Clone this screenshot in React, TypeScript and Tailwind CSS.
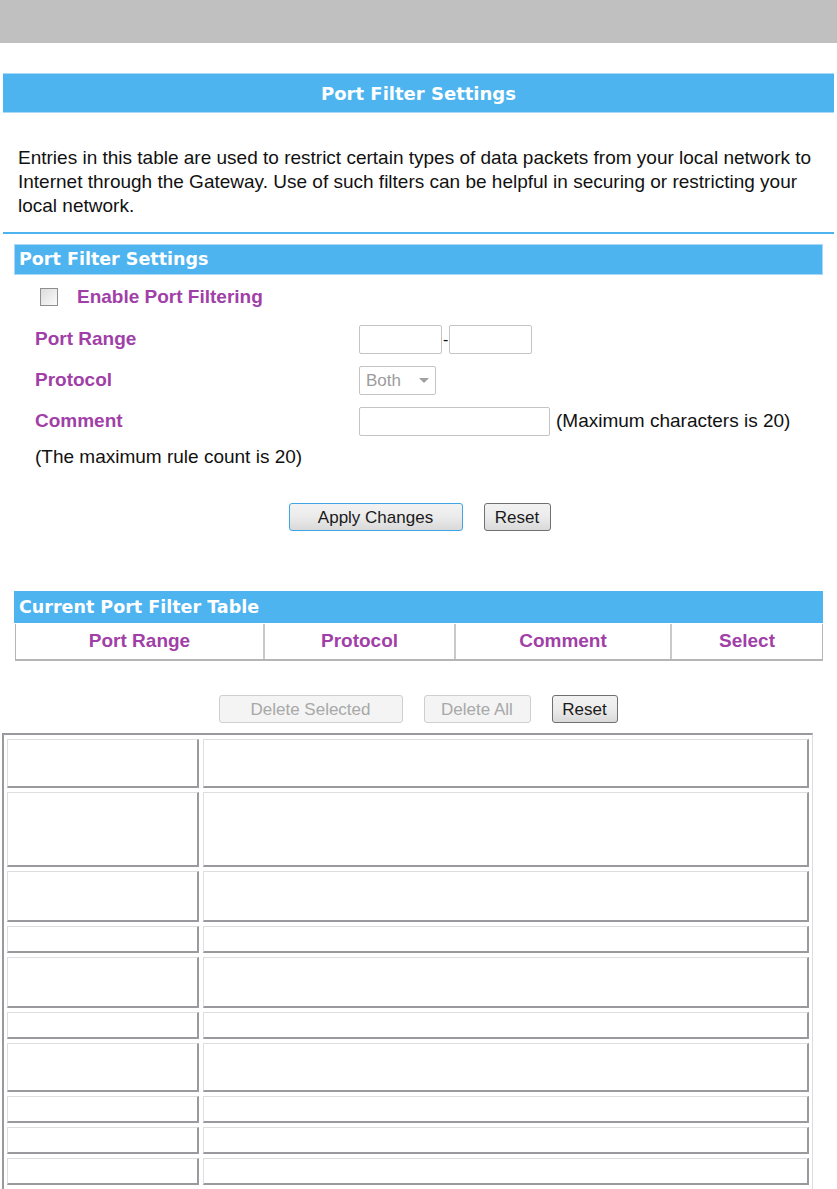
const PURPLE = "text-[#a13fa8]";

function FormRow({ label, children }: { label: string; children: React.ReactNode }) {
  return (
    <div className="flex h-[41px] items-center">
      <div className={`w-[359px] pl-[35px] text-[19px] font-bold ${PURPLE}`}>{label}</div>
      <div className="flex items-center">{children}</div>
    </div>
  );
}

function Btn({ children, w, variant = "normal" }: { children: React.ReactNode; w: string; variant?: "normal" | "focus" | "disabled" }) {
  const border =
    variant === "focus"
      ? "border-[#3fa6e6]"
      : variant === "disabled"
      ? "border-[#cfcfcf]"
      : "border-[#707070]";
  const text = variant === "disabled" ? "text-[#a8a8a8]" : "text-[#1a1a1a]";
  const bg =
    variant === "disabled"
      ? "bg-[#f4f4f4]"
      : "bg-gradient-to-b from-[#f2f2f2] via-[#ebebeb] to-[#d9d9d9]";
  return (
    <button
      className={`${w} h-[28px] rounded-[3px] border-[1.5px] ${border} ${bg} ${text} text-[17px] leading-none`}
    >
      {children}
    </button>
  );
}

const ROWS = [49, 75, 51, 27, 51, 27, 49, 27, 27, 27];

export default function App() {
  return (
    <div className="min-h-[1189px] w-[837px] bg-white font-['Liberation_Sans',Arial,sans-serif] text-[#111]">
      {/* top grey strip */}
      <div className="h-[43px] bg-[#c0c0c0]" />

      <div className="mx-[3px] mt-[30px] flex h-[40px] items-center justify-center border-y border-[#a9d9f7] bg-[#4db4f0]">
        <span className="font-['DejaVu_Sans',Verdana,sans-serif] text-[18px] font-bold text-white">
          Port Filter Settings
        </span>
      </div>

      <p className="ml-[18px] mt-[33px] w-[810px] text-[19px] leading-[24px]">
        Entries in this table are used to restrict certain types of data packets from your local network to
        <br />
        Internet through the Gateway. Use of such filters can be helpful in securing or restricting your
        <br />
        local network.
      </p>

      <div className="mx-[3px] mt-[14px] h-[2px] bg-[#4db4f0]" />

      {/* settings block */}
      <div className="ml-[14px] mr-[14px] mt-[10px] flex h-[31px] items-center border border-[#a9d9f7] bg-[#4db4f0] pl-[4px]">
        <span className="font-['DejaVu_Sans',Verdana,sans-serif] text-[17.5px] font-bold text-white">
          Port Filter Settings
        </span>
      </div>

      <div className="flex h-[44px] items-center pl-[40px]">
        <div className="h-[18px] w-[18px] border border-[#8e8e8e] bg-gradient-to-br from-[#dcdcdc] to-[#fbfbfb]" />
        <span className={`ml-[19px] text-[19px] font-bold ${PURPLE}`}>Enable Port Filtering</span>
      </div>

      <FormRow label="Port Range">
        <div className="h-[29px] w-[83px] rounded-[2px] border border-[#c4c4c4]" />
        <span className="mx-[1px] text-[16px]">-</span>
        <div className="h-[29px] w-[83px] rounded-[2px] border border-[#c4c4c4]" />
      </FormRow>
      <FormRow label="Protocol">
        <div className="flex h-[29px] w-[77px] items-center justify-between rounded-[2px] border border-[#c4c4c4] pl-[6px] pr-[6px] text-[17px] text-[#9c9c9c]">
          <span>Both</span>
          <svg width="10" height="6" viewBox="0 0 10 6">
            <path d="M0 0h10L5 5z" fill="#a0a0a0" />
          </svg>
        </div>
      </FormRow>
      <FormRow label="Comment">
        <div className="h-[29px] w-[191px] rounded-[2px] border border-[#c4c4c4]" />
        <span className="ml-[6px] text-[19px]">(Maximum characters is 20)</span>
      </FormRow>

      <div className="flex h-[31px] items-center pl-[35px] text-[19px]">(The maximum rule count is 20)</div>

      <div className="mt-[30px] flex justify-center gap-[21px] pl-[2px]">
        <Btn w="w-[174px]" variant="focus">Apply Changes</Btn>
        <Btn w="w-[67px]">Reset</Btn>
      </div>

      {/* current table */}
      <div className="ml-[14px] mr-[14px] mt-[60px] flex h-[32px] items-center bg-[#4db4f0] pl-[5px]">
        <span className="font-['DejaVu_Sans',Verdana,sans-serif] text-[17.5px] font-bold text-white">
          Current Port Filter Table
        </span>
      </div>
      <div className={`ml-[15px] mr-[14px] mt-[1px] flex h-[37px] border-b-2 border-l border-r border-[#b5b5b5] text-[19px] font-bold ${PURPLE}`}>
        <div className="flex w-[249px] items-center justify-center border-r-2 border-[#c9c9c9]">Port Range</div>
        <div className="flex w-[191px] items-center justify-center border-r-2 border-[#c9c9c9]">Protocol</div>
        <div className="flex w-[216px] items-center justify-center border-r-2 border-[#c9c9c9]">Comment</div>
        <div className="flex flex-1 items-center justify-center">Select</div>
      </div>

      <div className="mt-[34px] flex justify-center gap-[21px] pr-[1px]">
        <Btn w="w-[184px]" variant="disabled">Delete Selected</Btn>
        <Btn w="w-[107px]" variant="disabled">Delete All</Btn>
        <Btn w="w-[66px]">Reset</Btn>
      </div>

      {/* info table */}
      <div className="ml-[2px] mt-[10px] flex w-[811px] flex-col gap-[4px] border-b border-l-2 border-r border-t-2 border-b-[#dcdcdc] border-l-[#9a9a9e] border-r-[#dcdcdc] border-t-[#9a9a9e] px-[3px] pb-[4px] pt-[4px]">
        {ROWS.map((h, i) => (
          <div key={i} className="flex gap-[4px]" style={{ height: h }}>
            <div className="w-[192px] border-b-2 border-l border-r-2 border-t border-b-[#9a9a9e] border-l-[#dedede] border-r-[#9a9a9e] border-t-[#dedede]" />
            <div className="flex-1 border-b-2 border-l border-r-2 border-t border-b-[#9a9a9e] border-l-[#dedede] border-r-[#9a9a9e] border-t-[#dedede]" />
          </div>
        ))}
      </div>
    </div>
  );
}
